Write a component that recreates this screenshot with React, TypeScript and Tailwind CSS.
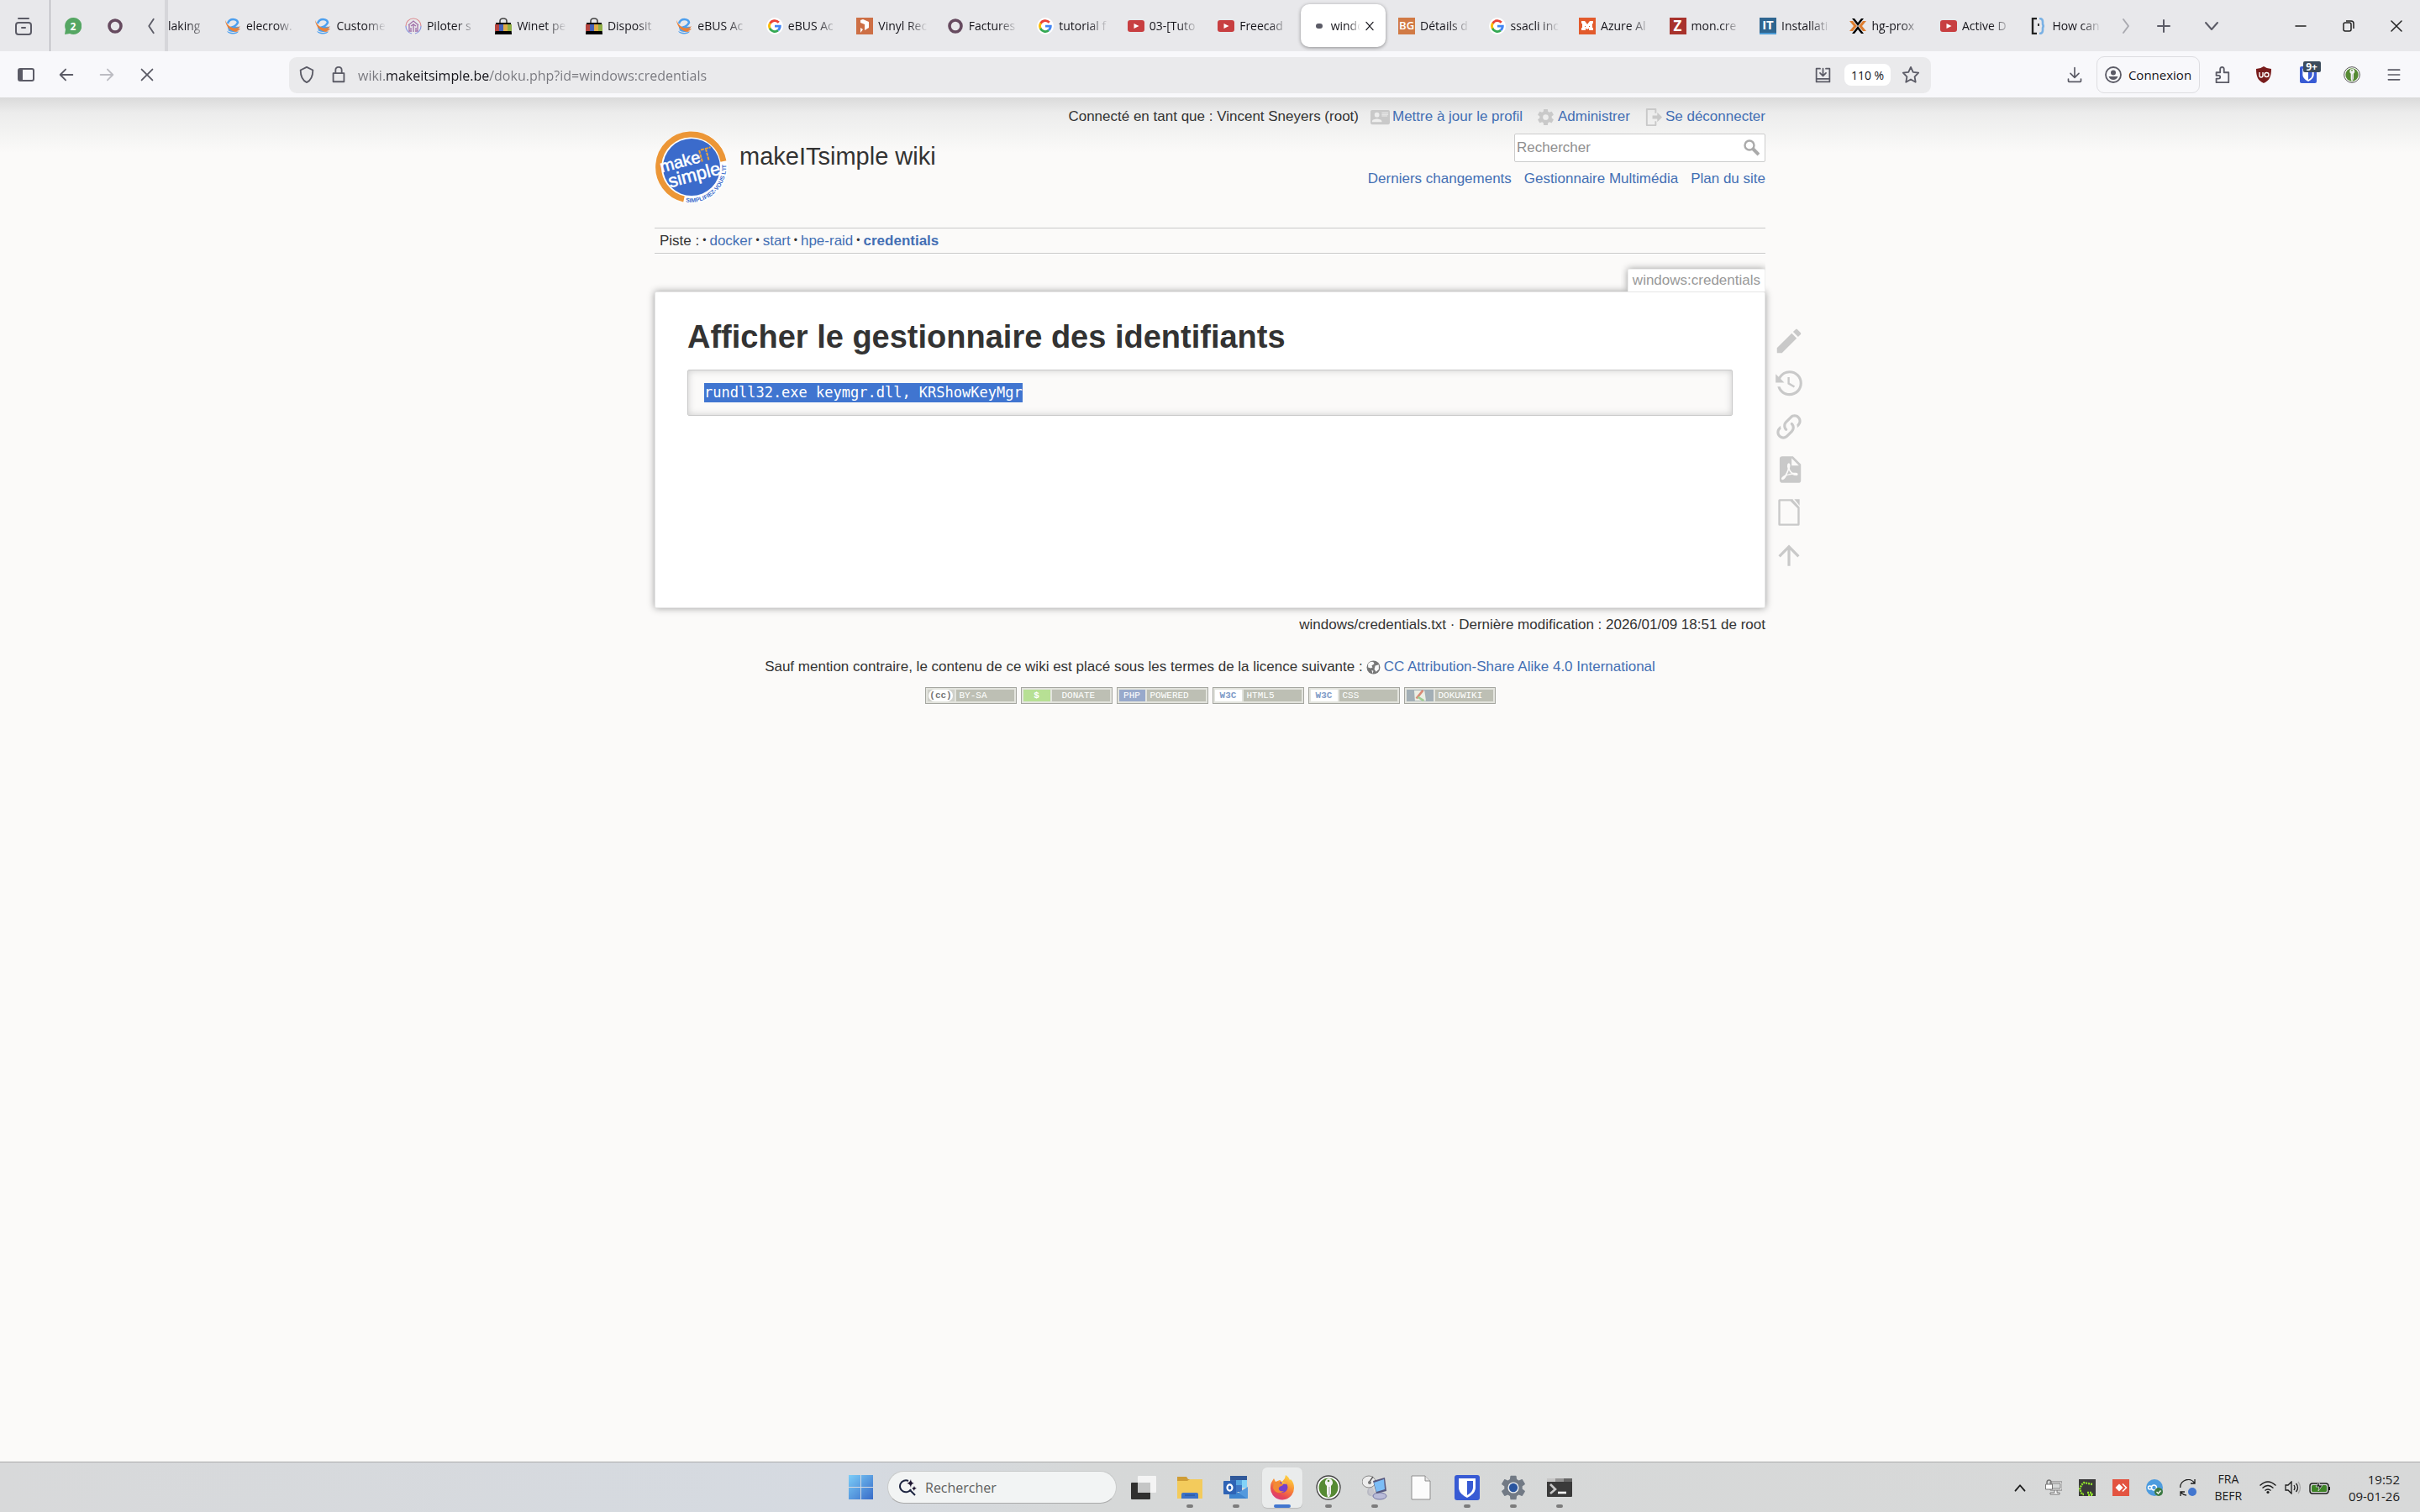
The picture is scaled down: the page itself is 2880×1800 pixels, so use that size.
import { useState } from 'react';
import type { ReactNode } from 'react';

const UI = "font-['Open_Sans','Noto_Sans',sans-serif]";

/* ---------- site icons ---------- */

const Elecrow = () => (
    <svg viewBox="0 0 20 20" className="size-5 shrink-0">
        <path d="M4 7c1-3 3-5 6.500-5S16 4 16 6c-2 4-7 6-12 6h12c-1 4-7 5-11 2" fill="none" stroke="#4d9fee" strokeWidth="2.600" />
        <path d="M1 3c2 5 5 8 9 9 3 1 6 0 9-2-1 2-2 3-4 4l4-1c-1 2-3 3-5 3l3 1C9 18 2 12 1 3Z" fill="#e8813a" />
        <path d="M3 16c1 2 4 3.500 7 3.500s6-1 7-3c-5 2-9 2-14-.5Z" fill="#4d9fee" />
    </svg>
);
const Google = () => (
    <svg viewBox="0 0 20 20" className="size-5 shrink-0">
        <circle cx="10" cy="10" r="10" fill="#fff" />
        <path d="M14.800 5.700A6.500 6.500 0 0 0 4.200 7.200" fill="none" stroke="#ea4335" strokeWidth="2.800" />
        <path d="M4.500 6.600a6.500 6.500 0 0 0 0 6.800" fill="none" stroke="#fbbc05" strokeWidth="2.800" />
        <path d="M4.200 12.800a6.500 6.500 0 0 0 9.800 2.400" fill="none" stroke="#34a853" strokeWidth="2.800" />
        <path d="M10 8.700h7.700c.3 3-.7 5.400-2.700 7.300l-2.300-1.900c1-.7 1.600-1.500 1.900-2.600H10Z" fill="#4285f4" />
    </svg>
);
const Bag = () => (
    <svg viewBox="0 0 20 20" className="size-5 shrink-0">
        <path d="M6 6V4q0-3 4-3t4 3v2" fill="none" stroke="#444" strokeWidth="1.600" />
        <path d="M1 6h18l1 14H0Z" fill="#000" />
        <path d="M0 8h5v8H0Z" fill="#b5443f" />
        <path d="M5 8h5v8H5Z" fill="#4460b8" />
        <path d="M10 8h5v8h-5Z" fill="#dfab46" />
        <path d="M15 8h5v8h-5Z" fill="#8fae45" />
    </svg>
);
const House = () => (
    <svg viewBox="0 0 20 20" className="size-5 shrink-0" fill="none">
        <path d="M1 10a9 9 0 0 1 18 0" stroke="#dc8a8e" strokeWidth="1.200" />
        <path d="M1 10a9 9 0 0 0 7 9M19 10a9 9 0 0 1-7 9" stroke="#8795df" strokeWidth="1.200" />
        <path d="m4 9 6-5 6 5M5 9v7h3M15 9v7h-3M10 7v10M7 10l3-2 3 2M7 12v3M13 12v3" stroke="#a06fa8" strokeWidth="1.300" />
    </svg>
);
const Vinyl = () => (
    <svg viewBox="0 0 20 20" className="size-5 shrink-0">
        <path d="M0 0h20v20H0Z" fill="#cd6f45" />
        <path d="m5 3 3-1 7 3v7l-5 3V8L5 6Z" fill="#fff" />
        <path d="m5 12 3 2-3 4Z" fill="#fff" />
    </svg>
);
const Ring = () => (
    <svg viewBox="0 0 20 20" className="size-5 shrink-0">
        <circle cx="10" cy="10" r="7" fill="none" stroke="#664a5f" strokeWidth="3.600" />
    </svg>
);
const Youtube = () => (
    <svg viewBox="0 0 20 20" className="size-5 shrink-0">
        <rect y="3" width="20" height="14" rx="3" fill="#c83f41" />
        <path d="m7.500 7 6 3-6 3Z" fill="#fff" />
    </svg>
);
const Proxmox = () => (
    <svg viewBox="0 0 20 20" className="size-5 shrink-0">
        <path d="M3 1h3l4 5 4-5h3l-7 9ZM3 19h3l4-5 4 5h3l-7-9Z" fill="#000" />
        <path d="M0 4h4l5 6-5 6H0l5-6ZM20 4h-4l-5 6 5 6h4l-5-6Z" fill="#dd7d2f" />
    </svg>
);
const Brackets = () => (
    <svg viewBox="0 0 20 20" className="size-5 shrink-0" fill="none">
        <path d="M8 1H3v18h5" stroke="#222" strokeWidth="2.400" />
        <path d="M11 1q4 0 4 4v2q0 3 2 3-2 0-2 3v2q0 4-4 4" stroke="#7ab1e4" strokeWidth="2.600" />
        <path d="M10 7v3" stroke="#222" strokeWidth="1.800" />
    </svg>
);
const Mosaic = () => (
    <svg viewBox="0 0 20 20" className="size-5 shrink-0">
        <path d="M0 0h20v20H0Z" fill="#e25a2c" />
        <path d="M3 4h4l3 4 3-4h4v3h-1v5h1v3h-5v-3h1l-3 2-3-2h1v3H3v-3h1V7H3Z" fill="#fff" />
        <path d="M7 10h1v1H7ZM12 10h1v1h-1Z" fill="#e25a2c" />
    </svg>
);
const Letter = ({ text, box }: { text: string; box: string }) => (
    <span className={`flex size-5 shrink-0 items-center justify-center text-white ${box}`}>{text}</span>
);
const Loading = () => (
    <span className="flex size-5 shrink-0 items-center justify-center"><span className="h-[6px] w-2 rounded-full bg-[#5b5b66]" /></span>
);

const tabs: { title: string; icon: ReactNode; active?: boolean }[] = [
    { title: 'elecrow.', icon: <Elecrow /> },
    { title: 'Custome', icon: <Elecrow /> },
    { title: 'Piloter s', icon: <House /> },
    { title: 'Winet pe', icon: <Bag /> },
    { title: 'Disposit', icon: <Bag /> },
    { title: 'eBUS Ac', icon: <Elecrow /> },
    { title: 'eBUS Ac', icon: <Google /> },
    { title: 'Vinyl Rec', icon: <Vinyl /> },
    { title: 'Factures', icon: <Ring /> },
    { title: 'tutorial f', icon: <Google /> },
    { title: '03-[Tuto', icon: <Youtube /> },
    { title: 'Freecad', icon: <Youtube /> },
    { title: 'windo', icon: <Loading />, active: true },
    { title: 'Détails d', icon: <Letter text="BG" box="bg-[#d17a45] text-[13px] font-semibold" /> },
    { title: 'ssacli inc', icon: <Google /> },
    { title: 'Azure Al', icon: <Mosaic /> },
    { title: 'mon.cre', icon: <Letter text="Z" box="bg-[#a8322c] text-[17px] font-bold" /> },
    { title: 'Installati', icon: <Letter text="IT" box="bg-[#2f6690] border-b-2 border-[#4a9ad4] text-[15px] font-bold" /> },
    { title: 'hg-prox', icon: <Proxmox /> },
    { title: 'Active D', icon: <Youtube /> },
    { title: 'How can', icon: <Brackets /> },
];

/* ---------- line icons of the browser ---------- */

const Line = ({ d, size = 'size-6', color = 'text-[#5b5b66]', w = 2 }: { d: string; size?: string; color?: string; w?: number }) => (
    <svg viewBox="0 0 24 24" className={`shrink-0 ${size} ${color}`} fill="none" stroke="currentColor" strokeWidth={w} strokeLinecap="round" strokeLinejoin="round">
        <path d={d} />
    </svg>
);

const IconButton = ({ label, width = 'w-12', children }: { label: string; width?: string; children: ReactNode }) => (
    <button type="button" aria-label={label} className={`flex h-11 shrink-0 items-center justify-center ${width}`}>
        {children}
    </button>
);

const KeePass = ({ size }: { size: string }) => (
    <svg viewBox="0 0 30 30" className={size}>
        <circle cx="15" cy="15" r="14" fill="#fff" stroke="#444" strokeWidth="1.400" />
        <circle cx="15" cy="15" r="11.500" fill="#568a34" />
        <path d="M15 4a5 5 0 0 1 3 9v9l-2 4h-2l-1-4v-9a5 5 0 0 1 2-9Z" fill="#f2f2f2" />
        <circle cx="15" cy="7" r="1.300" fill="#568a34" />
        <path d="M16 14v10" stroke="#aaa" />
    </svg>
);

const Shield = ({ size }: { size: string }) => (
    <svg viewBox="0 0 30 30" className={size}>
        <rect width="30" height="30" rx="3" fill="#385bd4" />
        <path d="M5 4h20v11q0 7-10 12Q5 22 5 15Z" fill="#fff" />
        <path d="M15 7h7v8q0 5-7 9Z" fill="#385bd4" />
    </svg>
);

const TabBar = () => (
    <div className="flex h-[61px] items-center bg-[#e8e8eb] text-[14px] text-[#15141a]">
        <div className="flex h-full w-[60px] items-center border-r border-[#a9a9af] pl-1">
            <IconButton label="Firefox View">
                <svg viewBox="0 0 24 24" className="size-6" fill="none" stroke="#5b5b66" strokeWidth="2" strokeLinecap="round">
                    <rect x="3" y="8" width="18" height="14" rx="3" />
                    <path d="M6 3h12M10 14h4" />
                </svg>
            </IconButton>
        </div>
        <button type="button" aria-label="WhatsApp" className="ml-[15px] flex size-6 items-center justify-center">
            <svg viewBox="0 0 20 20" className="size-5">
                <path d="M10 0a10 10 0 1 1-4 19l-6 1 1-6A10 10 0 0 1 10 0Z" fill="#55a663" />
                <text x="10" y="14.500" textAnchor="middle" fontSize="12" fontWeight="700" fill="#fff">2</text>
            </svg>
        </button>
        <button type="button" aria-label="Odoo" className="ml-[26px] flex size-6 items-center justify-center"><Ring /></button>
        <button type="button" aria-label="Onglets précédents" className="ml-[19px] flex w-6 items-center justify-center">
            <Line d="M15 3 9 12l6 9" size="size-[22px]" />
        </button>
        <div className="ml-1 flex h-full min-w-0 flex-1 items-center">
            <div className="flex h-full w-[59px] shrink-0 items-center border-l-4 border-[#d6d6da]">
                <span className="[mask-image:linear-gradient(90deg,#000_60%,#0006)]">laking</span>
            </div>
            {tabs.map((tab, i) => (
                <div key={i} className="h-[51px] min-w-0 flex-1 px-[3px]">
                    <div className={`flex h-full items-center ${tab.active ? 'gap-1 rounded-[10px] bg-white pl-3 pr-3 shadow-[0_1px_4px_rgba(0,0,0,0.4)]' : 'gap-[6px] pl-[9px] pr-2'}`}>
                        {tab.icon}
                        <span className="min-w-0 flex-1 overflow-hidden whitespace-nowrap [mask-image:linear-gradient(90deg,#000_60%,transparent)]">{tab.title}</span>
                        {tab.active && (
                            <button type="button" aria-label="Fermer l’onglet" className="shrink-0">
                                <Line d="m5 4 14 16M19 4 5 20" size="size-[14px]" color="text-[#15141a]" />
                            </button>
                        )}
                    </div>
                </div>
            ))}
        </div>
        <div className="flex shrink-0 items-center pl-[2px]">
            <IconButton label="Onglets suivants" width="w-[32px]"><Line d="m9 4 6 8-6 8" color="text-[#aaaab0]" /></IconButton>
            <IconButton label="Nouvel onglet" width="w-[58px]"><Line d="M12 5v14M5 12h14" /></IconButton>
            <IconButton label="Lister les onglets" width="w-[56px]"><Line d="m5 8 7 8 7-8" /></IconButton>
        </div>
        <div className="ml-[49px] flex shrink-0 items-center">
            <IconButton label="Réduire" width="w-[57px]"><Line d="M6 12h12" color="text-[#222]" w={1.5} /></IconButton>
            <IconButton label="Restaurer" width="w-[57px]">
                <svg viewBox="0 0 24 24" className="size-6" fill="none" stroke="#222" strokeWidth="1.500">
                    <rect x="6" y="8" width="9" height="10" rx="2" />
                    <path d="M9 6h6q3 0 3 3v6" />
                </svg>
            </IconButton>
            <IconButton label="Fermer" width="w-[57px]"><Line d="m6 6 12 12M18 6 6 18" color="text-[#222]" w={1.5} /></IconButton>
        </div>
    </div>
);

const NavBar = () => {
    const [url, setUrl] = useState('wiki.makeitsimple.be/doku.php?id=windows:credentials');

    return (
        <div className="flex h-[55px] items-center bg-[#f8f8fb] px-[7px] pt-px text-[15px] text-[#15141a]">
            <IconButton label="Panneau latéral">
                <svg viewBox="0 0 20 16" className="h-4 w-5">
                    <rect x="1" y="1" width="18" height="14" rx="2" fill="none" stroke="#5b5b66" strokeWidth="2" />
                    <path d="M1 1h5v14H1Z" fill="#5b5b66" />
                </svg>
            </IconButton>
            <IconButton label="Précédent"><Line d="M20 12H4m7-7-7 7 7 7" size="size-[22px]" /></IconButton>
            <IconButton label="Suivant"><Line d="M4 12h16m-7-7 7 7-7 7" size="size-[22px]" color="text-[#bcbcc2]" /></IconButton>
            <IconButton label="Arrêter"><Line d="m5 5 14 14M19 5 5 19" size="size-[22px]" /></IconButton>
            <div className="w-[145px] shrink" />
            <div className="flex h-[43px] min-w-0 flex-1 items-center rounded-[9px] bg-[#eaeaec]">
                <span className="flex w-[42px] justify-center"><Line d="M12 2 20 6c0 8-2 13-8 16C6 19 4 14 4 6Z" size="size-[22px]" /></span>
                <span className="flex w-[34px] justify-center"><Line d="M5 10h14v11H5ZM8 10V6q0-4 4-4t4 4v4" size="size-[22px]" /></span>
                <input
                    type="text"
                    aria-label="Adresse"
                    value={url}
                    onChange={(e) => setUrl(e.target.value)}
                    className="ml-[6px] min-w-0 flex-1 bg-[linear-gradient(90deg,#77777d_0_33px,#15141a_33px_157px,#77777d_157px)] bg-clip-text pt-[2px] text-[16px] text-transparent outline-none"
                />
                <IconButton label="Installer" width="w-10"><Line d="M8 3H3v18h18V3h-5M3 17h18M12 3v10m-4-4 4 4 4-4" size="size-[21px]" /></IconButton>
                <button type="button" className="ml-[6px] h-[26px] w-[55px] rounded-lg bg-white text-[14px]">110 %</button>
                <IconButton label="Marque-page" width="w-[48px]">
                    <Line d="m12 2 3 6.500 7 1-5 5 1.200 7L12 18l-6.200 3.500 1.200-7-5-5 7-1Z" size="size-[22px]" />
                </IconButton>
            </div>
            <div className="w-[147px] shrink" />
            <IconButton label="Téléchargements"><Line d="M12 2v14m-6-6 6 6 6-6M3 18v3q0 1 1 1h16q1 0 1-1v-3" size="size-5" /></IconButton>
            <button type="button" className="mx-[2px] flex h-11 w-[123px] shrink-0 items-center justify-center gap-2 rounded-[9px] border border-[#dddde1]">
                <svg viewBox="0 0 20 20" className="size-5">
                    <circle cx="10" cy="10" r="9" fill="none" stroke="#5b5b66" strokeWidth="1.800" />
                    <circle cx="10" cy="7.500" r="3" fill="#5b5b66" />
                    <path d="M4.500 12h11q-1.500 4-5.500 4t-5.500-4Z" fill="#5b5b66" />
                </svg>
                Connexion
            </button>
            <IconButton label="Extensions"><Line d="M5 9h5V5q0-3 2.500-3T15 5v4h6v13H5v-5h3q2 0 2-2t-2-2H5Z" size="size-[22px]" /></IconButton>
            <IconButton label="uBlock Origin" width="w-[52px]">
                <svg viewBox="0 0 20 20" className="size-5">
                    <path d="M10 0q4 3 9 3c0 9-2 14-9 17C3 17 1 12 1 3q5 0 9-3Z" fill="#781c1c" />
                    <path d="M5 7v4q0 2 2 2t2-2V7m2 3a2.500 2.500 0 1 0 5 0 2.500 2.500 0 0 0-5 0" fill="none" stroke="#fff" strokeWidth="1.400" />
                </svg>
            </IconButton>
            <IconButton label="Bitwarden" width="w-[53px]">
                <span className="relative">
                    <Shield size="size-5" />
                    <span className="absolute -top-[6px] left-[4px] flex h-[13px] w-[21px] items-center justify-center rounded-[2px] bg-[#3c4c5c] text-[12px] font-bold text-white">9+</span>
                </span>
            </IconButton>
            <IconButton label="KeePassXC" width="w-[52px]"><KeePass size="size-5" /></IconButton>
            <IconButton label="Menu" width="w-[48px]"><Line d="M4 5h16M4 12h16M4 19h16" size="size-5" /></IconButton>
        </div>
    );
};

/* ---------- wiki ---------- */

const paths = {
    profile: 'M2 3h20c1 0 2 1 2 2v14c0 1-1 2-2 2H2c-1 0-2-1-2-2V5c0-1 1-2 2-2m12 3v1h8V6h-8m0 2v1h8V8h-8m0 2v1h7v-1h-7m-6 4c-2 0-6 1-6 3v1h12v-1c0-2-4-3-6-3m0-8a3 3 0 0 0 0 6 3 3 0 0 0 0-6Z',
    admin: 'M12,15.500A3.500,3.500 0 0,1 8.500,12A3.500,3.500 0 0,1 12,8.500A3.500,3.500 0 0,1 15.500,12A3.500,3.500 0 0,1 12,15.500M19.430,12.970C19.470,12.650 19.500,12.330 19.500,12C19.500,11.670 19.470,11.340 19.430,11L21.540,9.370C21.730,9.220 21.780,8.950 21.660,8.730L19.660,5.270C19.540,5.050 19.270,4.960 19.050,5.050L16.560,6.050C16.040,5.660 15.500,5.320 14.870,5.070L14.500,2.420C14.460,2.180 14.250,2 14,2H10C9.750,2 9.540,2.180 9.500,2.420L9.130,5.070C8.500,5.320 7.960,5.660 7.440,6.050L4.950,5.050C4.730,4.960 4.460,5.050 4.340,5.270L2.340,8.730C2.210,8.950 2.270,9.220 2.460,9.370L4.570,11C4.530,11.340 4.500,11.670 4.500,12C4.500,12.330 4.530,12.650 4.570,12.970L2.460,14.630C2.270,14.780 2.210,15.050 2.340,15.270L4.340,18.730C4.460,18.950 4.730,19.030 4.950,18.950L7.440,17.940C7.960,18.340 8.500,18.680 9.130,18.930L9.500,21.580C9.540,21.820 9.750,22 10,22H14C14.250,22 14.460,21.820 14.500,21.580L14.870,18.930C15.500,18.670 16.040,18.340 16.560,17.940L19.050,18.950C19.270,19.030 19.540,18.950 19.660,18.730L21.660,15.270C21.780,15.050 21.730,14.780 21.540,14.630L19.430,12.970Z',
    logout: 'M4 1h11q1 0 1 1v5h-2V3H5v18h9v-4h2v5q0 1-1 1H4q-1 0-1-1V2q0-1 1-1ZM11 10h6V6l6 6-6 6v-4h-6Z',
    edit: 'M20.710,7.040C21.100,6.650 21.100,6 20.710,5.630L18.370,3.290C18,2.900 17.350,2.900 16.960,3.290L15.120,5.120L18.870,8.870M3,17.250V21H6.750L17.810,9.930L14.060,6.180L3,17.250Z',
    history: 'M11,7V12.110L15.710,14.900L16.500,13.620L12.500,11.250V7M12.500,2C8.970,2 5.910,3.920 4.270,6.770L2,4.500V11H8.500L5.750,8.250C6.960,5.730 9.500,4 12.500,4A7.500,7.500 0 0,1 20,11.500A7.500,7.500 0 0,1 12.500,19C9.230,19 6.470,16.910 5.440,14H3.340C4.440,18.030 8.110,21 12.500,21C17.740,21 22,16.750 22,11.500A9.500,9.500 0 0,0 12.500,2Z',
    backlinks: 'M10.590,13.410C11,13.800 11,14.440 10.590,14.830C10.200,15.220 9.560,15.220 9.170,14.830C7.220,12.880 7.220,9.710 9.170,7.760L12.710,4.220C14.660,2.270 17.830,2.270 19.780,4.220C21.730,6.170 21.730,9.340 19.780,11.290L18.290,12.780C18.300,11.960 18.170,11.140 17.890,10.360L18.360,9.880C19.540,8.710 19.540,6.810 18.360,5.640C17.190,4.460 15.290,4.460 14.120,5.640L10.590,9.170C9.410,10.340 9.410,12.240 10.590,13.410M13.410,9.170C13.800,8.780 14.440,8.780 14.830,9.170C16.780,11.120 16.780,14.290 14.830,16.240L11.290,19.780C9.340,21.730 6.170,21.730 4.220,19.780C2.270,17.830 2.270,14.660 4.220,12.710L5.710,11.220C5.700,12.040 5.830,12.860 6.110,13.650L5.640,14.120C4.460,15.290 4.460,17.190 5.640,18.360C6.810,19.540 8.710,19.540 9.880,18.360L13.410,14.830C14.590,13.660 14.590,11.760 13.410,10.590C13,10.200 13,9.560 13.410,9.170Z',
    pdf: 'M14,9H19.500L14,3.500V9M7,2H15L21,8V20A2,2 0 0,1 19,22H7C5.890,22 5,21.100 5,20V4A2,2 0 0,1 7,2M11.930,12.440C12.340,13.340 12.860,14.080 13.460,14.590L13.870,14.910C13,15.070 11.800,15.350 10.530,15.840L10.420,15.880L10.920,14.840C11.370,13.970 11.700,13.180 11.930,12.440M18.410,16.250C18.590,16.070 18.680,15.840 18.690,15.590C18.720,15.390 18.670,15.200 18.570,15.040C18.280,14.570 17.530,14.350 16.290,14.350L15,14.420L14.130,13.840C13.500,13.320 12.930,12.410 12.530,11.280L12.570,11.140C12.900,9.810 13.210,8.200 12.550,7.540C12.390,7.380 12.170,7.300 11.940,7.300H11.700C11.330,7.300 11,7.690 10.910,8.070C10.540,9.400 10.760,10.130 11.130,11.340C10.880,12.230 10.560,13.250 10.050,14.280L9.090,16.080L8.200,16.570C7,17.320 6.430,18.160 6.320,18.690C6.280,18.880 6.300,19.050 6.370,19.230L6.400,19.280L6.880,19.590L7.320,19.700C8.130,19.700 9.050,18.750 10.290,16.630L10.470,16.560C11.500,16.230 12.780,16 14.500,15.810C15.530,16.320 16.740,16.550 17.500,16.550C17.940,16.550 18.240,16.440 18.410,16.250Z',
    odt: 'M5 2h10v.5L20 8v13q0 1-1 1H5q-1 0-1-1V3q0-1 1-1Zm.5 1.500v17h13V9L13 3.500ZM16 2h4v5Z',
    top: 'M13,20H11V8L5.500,13.500L4.080,12.080L12,4.160L19.920,12.080L18.500,13.500L13,8V20Z',
};

const Glyph = ({ d, size }: { d: string; size: string }) => (
    <svg viewBox="0 0 24 24" className={`shrink-0 fill-[#c9c9c9] ${size}`}><path fillRule="evenodd" d={d} /></svg>
);

const pageTools = [
    { label: 'Modifier cette page', d: paths.edit },
    { label: 'Anciennes révisions', d: paths.history },
    { label: 'Liens de retour', d: paths.backlinks },
    { label: 'Exporter en PDF', d: paths.pdf },
    { label: 'Exporter en ODT', d: paths.odt },
    { label: 'Haut de page', d: paths.top },
];

const Logo = () => (
    <svg viewBox="0 0 88 88" className="size-[88px] shrink-0 font-['Liberation_Sans',Arial,sans-serif]">
        <circle cx="44" cy="44" r="43" fill="#fff" />
        <path d="M35 82A39 39 0 1 1 82 37" fill="none" stroke="#ec9636" strokeWidth="7" />
        <circle cx="44" cy="44" r="34" fill="#3b6bcb" />
        <g transform="rotate(-15 44 44)" fill="#fff">
            <text x="8" y="41" fontSize="20" stroke="#fff" strokeWidth="0.500">make</text>
            <text x="13" y="61" fontSize="22" stroke="#fff" strokeWidth="0.500">simple</text>
            <path d="M58 27v14M60 27h12M66 27v14" stroke="#eba33a" strokeWidth="2" strokeDasharray="4 1" fill="none" />
        </g>
        <path id="arc" d="M37 85.500A42 42 0 0 0 85 41" fill="none" />
        <text fontSize="7" fontWeight="700" fill="#3b6bcb"><textPath href="#arc">SIMPLIFIEZ-VOUS L’IT !</textPath></text>
    </svg>
);

const link = 'text-[#436fb4] hover:underline';

const Header = () => {
    const [term, setTerm] = useState('');

    return (
        <header className="col-start-2 flex h-[155px] items-start justify-between">
            <a href="#start" className="flex pt-[39px]">
                <Logo />
                <span className="ml-[13px] mt-[13px] text-[29px] leading-9 text-[#333]">makeITsimple wiki</span>
            </a>
            <div className="flex flex-col items-end pt-[11px]">
                <ul className="flex h-6 items-center">
                    <li className="mr-[14px]">Connecté en tant que : Vincent Sneyers (root)</li>
                    <li className="mr-4"><a href="#profile" className={`flex items-center gap-[3px] ${link}`}><Glyph d={paths.profile} size="size-[23px]" />Mettre à jour le profil</a></li>
                    <li className="mr-4"><a href="#admin" className={`flex items-center gap-[3px] ${link}`}><Glyph d={paths.admin} size="size-[23px]" />Administrer</a></li>
                    <li><a href="#logout" className={`flex items-center gap-[3px] ${link}`}><Glyph d={paths.logout} size="size-[23px]" />Se déconnecter</a></li>
                </ul>
                <form className="mt-[8px] flex h-[34px] w-[299px] items-center rounded-[2px] border border-[#ccc] bg-white" onSubmit={(e) => e.preventDefault()}>
                    <input
                        type="text"
                        aria-label="Rechercher"
                        placeholder="Rechercher"
                        value={term}
                        onChange={(e) => setTerm(e.target.value)}
                        className="min-w-0 flex-1 pl-[2px] outline-none placeholder:text-[#8f8f8f]"
                    />
                    <button type="submit" aria-label="Rechercher" className="mr-[6px]">
                        <svg viewBox="0 0 20 20" className="size-5" fill="none" stroke="#aaa">
                            <circle cx="8" cy="7" r="5.500" strokeWidth="2.400" />
                            <path d="m12 11 7 7" strokeWidth="4" />
                        </svg>
                    </button>
                </form>
                <ul className="mt-[8px] flex h-6 items-center gap-[15px]">
                    <li><a href="#recent" className={link}>Derniers changements</a></li>
                    <li><a href="#media" className={link}>Gestionnaire Multimédia</a></li>
                    <li><a href="#index" className={link}>Plan du site</a></li>
                </ul>
            </div>
        </header>
    );
};

const badgeBox = 'flex h-5 w-[109px] border border-[#a5a6a0] bg-[#e3e4de] p-[2px] font-mono text-[11px] leading-[14px] text-white';

const badges: { label: string; left: ReactNode; box: string; text: string }[] = [
    { label: 'BY-SA', left: <span className="rounded-full bg-white px-px font-bold text-[#777]">(cc)</span>, box: 'w-[32px] bg-[#cfd0ca]', text: 'pl-1' },
    { label: 'DONATE', left: '$', box: 'w-[32px] bg-[#b7e094] font-bold', text: 'pl-3' },
    { label: 'PHP POWERED', left: 'PHP', box: 'w-[31px] bg-[#98a9cb]', text: 'pl-1' },
    { label: 'HTML5', left: 'W3C', box: 'w-[32px] bg-white font-bold text-[#7f9cc8]', text: 'pl-1' },
    { label: 'CSS', left: 'W3C', box: 'w-[32px] bg-white font-bold text-[#7f9cc8]', text: 'pl-1' },
    {
        label: 'DOKUWIKI',
        left: (
            <svg viewBox="0 0 30 16" className="h-[14px] w-[30px]">
                <path d="M7 1h14l2 14H8Z" fill="#eceee4" />
                <path d="m10 12 9-11" stroke="#d98a76" strokeWidth="3" />
                <path d="m12 10 8 5" stroke="#9fce92" strokeWidth="3" />
            </svg>
        ),
        box: 'w-[32px] bg-[#a3afb6]',
        text: 'pl-1',
    },
];

const Footer = () => (
    <footer className="col-start-2">
        <p className="mt-2 text-right leading-6">windows/credentials.txt · Dernière modification : 2026/01/09 18:51 de root</p>
        <div className="mt-[26px] flex items-center justify-center leading-6">
            <span className="mr-1">Sauf mention contraire, le contenu de ce wiki est placé sous les termes de la licence suivante :</span>
            <a href="#license" className={`flex items-center gap-1 ${link}`}>
                <svg viewBox="0 0 16 16" className="size-[17px]">
                    <circle cx="8" cy="8" r="7.500" fill="#777" />
                    <path d="M2 4q3-3 6-2l1 2-3 2 1 2-2 1-3-1ZM10 6l4-1v5l-3 3-2-3ZM6 11l2 1-1 3Z" fill="#fafafa" />
                </svg>
                CC Attribution-Share Alike 4.0 International
            </a>
        </div>
        <div className="mt-[12px] flex justify-center gap-[5px]">
            {badges.map((badge) => (
                <a key={badge.label} href="#badge" className={badgeBox}>
                    <span className={`flex items-center justify-center ${badge.box}`}>{badge.left}</span>
                    <span className={`ml-[2px] flex-1 whitespace-nowrap bg-[#bdbfb4] ${badge.text}`}>
                        {badge.label.replace('PHP ', '')}
                    </span>
                </a>
            ))}
        </div>
    </footer>
);

const WikiPage = () => (
    <main className="grid flex-1 grid-cols-[1fr_minmax(0,1322px)_1fr] content-start bg-[#fbfaf9] bg-[linear-gradient(#dadada_0,#ececec_18px,#f3f3f2_42px,#fbfaf9_66px)] font-['Liberation_Sans',Arial,sans-serif] text-[17px] text-[#333]">
        <Header />
        <nav className="col-start-2 flex gap-1 border-y border-[#c9c9c9] pl-[6px] leading-[29px] shadow-[0_1px_0_#fff]">
            <span>Piste :</span>
            <span className="text-[12px]">•</span><a href="#docker" className={link}>docker</a>
            <span className="text-[12px]">•</span><a href="#start" className={link}>start</a>
            <span className="text-[12px]">•</span><a href="#hpe-raid" className={link}>hpe-raid</a>
            <span className="text-[12px]">•</span><a href="#credentials" className={`font-bold ${link}`}>credentials</a>
        </nav>
        <div className="z-10 col-start-2 justify-self-end overflow-hidden pl-2 pt-[18px]">
            <div className="rounded-t-[2px] border border-b-0 border-[#eee] bg-white px-[5px] leading-[26px] text-[#999] shadow-[0_0_9px_#999]">
                windows:credentials
            </div>
        </div>
        <article className="col-start-2 min-h-[377px] rounded-[2px] border border-[#e6e6e6] bg-white px-[38px] pt-[27px] shadow-[0_0_9px_#999]">
            <h1 className="text-[38px] font-bold leading-[52px] text-[#333]">Afficher le gestionnaire des identifiants</h1>
            <pre className="mt-[13px] h-[55px] rounded-[2px] border border-[#c8c8c8] bg-[#fbfaf9] px-[19px] py-[15px] font-['DejaVu_Sans_Mono',monospace] text-[17px] leading-[23px] shadow-[inset_0_0_9px_#ccc]">
                <span className="inline-block bg-[#4075d0] text-white">rundll32.exe keymgr.dll, KRShowKeyMgr</span>
            </pre>
        </article>
        <aside className="col-start-3 flex flex-col gap-[13px] pl-[9px] pt-10">
            {pageTools.map((tool) => (
                <a key={tool.label} href="#tool" aria-label={tool.label} className="size-[38px]"><Glyph d={tool.d} size="size-[38px]" /></a>
            ))}
        </aside>
        <Footer />
    </main>
);

/* ---------- taskbar ---------- */

const apps: { name: string; running: boolean; active?: boolean; icon: ReactNode }[] = [
    {
        name: 'Vue des tâches', running: false, icon: (
            <svg viewBox="0 0 30 30" className="size-[30px]">
                <rect y="9" width="23" height="20" rx="1" fill="#30302f" />
                <rect x="8" y="1" width="22" height="20" rx="1" fill="#f4f4f4" />
                <path d="M8 9h15v12H8Z" fill="#c5c6c6" />
            </svg>
        ),
    },
    {
        name: 'Explorateur', running: true, icon: (
            <svg viewBox="0 0 30 30" className="size-[30px]">
                <path d="M0 2h11l2 3h17v8H0Z" fill="#cf9d36" />
                <path d="M0 7h12l3-2h15v23H0Z" fill="#f3cb5c" />
                <path d="M5 28v-5q0-2 2-2h16q2 0 2 2v5Z" fill="#3c72c6" />
                <path d="M9 24h12" stroke="#254d8e" />
            </svg>
        ),
    },
    {
        name: 'Outlook', running: true, icon: (
            <svg viewBox="0 0 30 30" className="size-[30px]">
                <path d="M8 1h20v5H8Z" fill="#30599a" />
                <path d="M8 6h7v14H8Z" fill="#3769b8" />
                <path d="M15 6h7v9h-7Z" fill="#56a6e0" />
                <path d="M22 6h6v9h-6Z" fill="#82d3f8" />
                <path d="M15 12h7v8h-7Z" fill="#3d75c4" />
                <path d="m7 28 22-14v14Z" fill="#5399dd" />
                <path d="M7 14v14h21Z" fill="#3d84cf" />
                <rect y="7" width="15" height="16" rx="1" fill="#2e63b5" />
                <ellipse cx="7.500" cy="15" rx="3" ry="3.600" fill="none" stroke="#fff" strokeWidth="2.200" />
            </svg>
        ),
    },
    {
        name: 'Firefox', running: true, active: true, icon: (
            <svg viewBox="0 0 30 30" className="size-[30px]">
                <defs>
                    <linearGradient id="fx" x1="0.800" y1="0" x2="0.300" y2="1">
                        <stop offset="0" stopColor="#ffdf45" />
                        <stop offset="0.450" stopColor="#f98b35" />
                        <stop offset="0.800" stopColor="#e84855" />
                        <stop offset="1" stopColor="#d63c80" />
                    </linearGradient>
                </defs>
                <path d="M2 9 5 4l2 4 5-2c2 1 3 2 2 3l4-5 1-4c2 1 4 3 5 6l1-1c3 3 4 6 4 10A14 14 0 0 1 1 16c0-3 0-5 1-7Z" fill="url(#fx)" />
                <circle cx="15" cy="14.500" r="6.500" fill="#7641c9" />
                <path d="M5 9c3-2 6-1 8 1l3 1c0 2-4 2-5 4-1 3 2 5 6 4-4 4-12 2-13-4Z" fill="#f28a35" />
                <path d="M14 8q4-1 6 3-3-1-5 0Z" fill="#ffbd3e" />
            </svg>
        ),
    },
    { name: 'KeePass', running: true, icon: <KeePass size="size-[30px]" /> },
    {
        name: 'Connexions', running: true, icon: (
            <svg viewBox="0 0 30 30" className="size-[30px]">
                <ellipse cx="10" cy="20" rx="4" ry="5" fill="#b9bac4" />
                <path d="M8 15q0-3 4-1l5 10-5 2-4-5Z" fill="#c6c6ce" />
                <ellipse cx="8" cy="8" rx="8" ry="7" fill="#ededed" stroke="#888" />
                <path d="m8 9 5-7" stroke="#555" strokeWidth="1.300" /><circle cx="9" cy="9" r="2" fill="#777" />
                <ellipse cx="21" cy="25" rx="8" ry="4" fill="#b9bbd8" stroke="#7577a4" />
                <path d="m13 7 14-4 2 16-12 3Z" fill="#56577e" />
                <path d="m14 9 12-4 1 12-10 3Z" fill="#7cbdf6" />
            </svg>
        ),
    },
    {
        name: 'Document', running: false, icon: (
            <svg viewBox="0 0 30 30" className="size-[30px]">
                <path d="M4 1h16l6 6v22H4Z" fill="#fcfcfc" stroke="#8e8e8e" /><path d="M20 1v6h6" fill="#e5e5e5" stroke="#8e8e8e" />
            </svg>
        ),
    },
    { name: 'Bitwarden', running: true, icon: <Shield size="size-[30px]" /> },
    {
        name: 'Paramètres', running: true, icon: (
            <svg viewBox="1.500 2 21 20" className="size-[30px]">
                <path d={paths.admin} fill="#727a85" />
                <circle cx="12" cy="12" r="4.600" fill="#edf0f3" /><circle cx="12" cy="12" r="3.600" fill="#2a559f" />
            </svg>
        ),
    },
    {
        name: 'Terminal', running: true, icon: (
            <svg viewBox="0 0 30 30" className="size-[30px]">
                <rect y="4" width="30" height="22" rx="1" fill="#3a3a3a" />
                <path d="M0 4h10v4H0Z" fill="#c6c6c6" /><path d="M10 4h10v4H10Z" fill="#949494" /><path d="M20 4h10v4H20Z" fill="#656565" />
                <path d="m4 11 6 6-6 5" fill="none" stroke="#c9c9c9" strokeWidth="2.600" />
                <path d="M13 21h10" stroke="#fff" strokeWidth="2.600" />
            </svg>
        ),
    },
];

const Tray = ({ label, children }: { label: string; children: ReactNode }) => (
    <button type="button" aria-label={label} className="flex h-full w-10 items-center justify-center">{children}</button>
);

const Taskbar = () => {
    const [query, setQuery] = useState('');

    return (
        <div className="grid h-[60px] grid-cols-[1fr_auto_1fr] border-t border-[#aaa] bg-[linear-gradient(90deg,#d8d9da,#d5dae1_35%,#d6d8d8_45%,#d8d9d9)] text-[#1c1c1c]">
            <div />
            <div className="flex items-center">
                <button type="button" aria-label="Démarrer" className="flex w-[55px] justify-center">
                    <svg viewBox="0 0 29 29" className="size-[29px]">
                        <defs>
                            <linearGradient id="win" x1="0" y1="0" x2="1" y2="1">
                                <stop offset="0" stopColor="#7bcdf8" /><stop offset="1" stopColor="#386bc8" />
                            </linearGradient>
                        </defs>
                        <path d="M0 0h14v14H0ZM15 0h14v14H15ZM0 15h14v14H0ZM15 15h14v14H15Z" fill="url(#win)" />
                    </svg>
                </button>
                <label className="mx-1 flex h-[39px] w-[273px] items-center rounded-full border border-[#c8caca] border-b-[#aaa] bg-[#f2f4f4]">
                    <svg viewBox="0 0 22 22" className="ml-3 size-[22px]">
                        <path d="M12 3a7 7 0 1 0 3 10m-1 1 6 6" fill="none" stroke="#1c2440" strokeWidth="2" />
                        <path d="M15 1q0 4 4 5-4 0-4 5-1-5-5-5 4-1 5-5ZM19 9q0 2 3 3-3 0-3 3-1-3-3-3 3-1 3-3Z" fill="#1c1430" />
                    </svg>
                    <input
                        type="text"
                        aria-label="Rechercher"
                        placeholder="Rechercher"
                        value={query}
                        onChange={(e) => setQuery(e.target.value)}
                        className="ml-[10px] w-[200px] text-[16px] outline-none placeholder:text-[#5e6060]"
                    />
                </label>
                {apps.map((app) => (
                    <button key={app.name} type="button" aria-label={app.name} className="flex h-full w-[55px] items-center justify-center">
                        <span className={`relative flex size-12 items-center justify-center rounded-md ${app.active ? 'bg-[#eaecec] shadow-[0_1px_1px_#bbb]' : ''}`}>
                            {app.icon}
                            {app.running && <span className={`absolute bottom-0 h-1 rounded-full ${app.active ? 'w-5 bg-[#4276cf]' : 'w-2 bg-[#7c7c7c]'}`} />}
                        </span>
                    </button>
                ))}
            </div>
            <div className="flex items-center justify-end pr-6">
                <Tray label="Afficher les icônes cachées"><Line d="m6 16 6-7 6 7" size="size-[22px]" color="text-[#1c1c1c]" /></Tray>
                <Tray label="Verrouillage">
                    <svg viewBox="0 0 20 20" className="size-5" fill="#fff" stroke="#777">
                        <path d="M6 3h14v10H6ZM11 13v3H6v2h11v-2h-3v-3" /><path d="M8 5h10v6H8Z" fill="#d7d9d9" />
                        <path d="M2 6V4q0-3 2.500-3T7 4v2" fill="none" strokeWidth="1.500" /><path d="M.5 6h8v6h-8Z" />
                    </svg>
                </Tray>
                <Tray label="Greenshot">
                    <svg viewBox="0 0 20 20" className="size-5">
                        <path d="M0 0h20v20H0Z" fill="#3a3a3a" />
                        <path d="M16 6 6 4 3 7 1 12l3 6h2m4-2h5l1 3m-5 0h5" fill="none" stroke="#92e52b" strokeWidth="2.400" strokeDasharray="2 1" />
                    </svg>
                </Tray>
                <Tray label="AnyDesk">
                    <svg viewBox="0 0 20 20" className="size-5">
                        <path d="M0 0h20v20H0Z" fill="#e35441" /><path d="m8 5.500 4.500 4.500L8 14.500 3.500 10Z" fill="#fff" />
                        <path d="m12 5.500 4.500 4.500-4.500 4.500" fill="none" stroke="#fff" strokeWidth="1.500" />
                    </svg>
                </Tray>
                <Tray label="Nextcloud">
                    <svg viewBox="0 0 20 20" className="size-5">
                        <circle cx="10" cy="10" r="10" fill="#4d9cdf" />
                        <path d="M2.500 10a2 2 0 1 0 4 0 2 2 0 0 0-4 0m4 0a3 3 0 1 0 6 0 3 3 0 0 0-6 0m6 0a2 2 0 1 0 4 0" fill="none" stroke="#fff" strokeWidth="1.500" />
                        <circle cx="15" cy="15" r="5" fill="#3d7a43" /><path d="m12.500 15 2 2 3-3.500" fill="none" stroke="#fff" strokeWidth="1.400" />
                    </svg>
                </Tray>
                <Tray label="Synchronisation">
                    <svg viewBox="0 0 20 20" className="size-5" fill="none" stroke="#1c1c1c" strokeWidth="1.300">
                        <path d="M.7 10A9.300 9.300 0 0 1 18 5m0-5v5h-5M1 20v-5h5m-5 0q3 4 7 4" /><circle cx="15" cy="15" r="5" fill="#4276cf" stroke="none" />
                    </svg>
                </Tray>
                <span className="w-14 text-center text-[14px] leading-5">FRA<br />BEFR</span>
                <svg viewBox="0 0 20 16" className="ml-[9px] h-4 w-5" fill="none" stroke="#1c1c1c" strokeWidth="1.300">
                    <path d="M.5 5.500q9.500-9 19 0M3.500 8.500q6.500-6 13 0M6.500 11.500q3.500-3 7 0" /><circle cx="10" cy="13.500" r="1.600" fill="#1c1c1c" stroke="none" />
                </svg>
                <svg viewBox="0 0 20 16" className="ml-[10px] h-4 w-5" fill="none" stroke="#1c1c1c" strokeWidth="1.300">
                    <path d="M1 5h3l4-4v14l-4-4H1ZM11 5q2 3 0 6M13.500 3q4 5 0 10" /><path d="M16 1q5 7 0 14" stroke="#aaa" />
                </svg>
                <svg viewBox="0 0 26 18" className="ml-[9px] h-[18px] w-[26px]">
                    <rect x="1" y="4" width="22" height="12" rx="3" fill="none" stroke="#1c1c1c" strokeWidth="1.400" />
                    <rect x="3" y="6" width="18" height="8" rx="1.500" fill="#3e8427" /><path d="M24 8v4" stroke="#1c1c1c" strokeWidth="2" />
                    <path d="m13 1-5 7h4l-1 5 5-7h-4Z" fill="#1c1c1c" stroke="#d7d9d9" strokeWidth="0.800" />
                </svg>
                <time className="ml-[21px] text-right text-[15px] leading-5">19:52<br />09-01-26</time>
            </div>
        </div>
    );
};

const App = () => (
    <div className={`flex min-h-screen flex-col ${UI}`}>
        <TabBar />
        <NavBar />
        <WikiPage />
        <Taskbar />
    </div>
);

export default App;
